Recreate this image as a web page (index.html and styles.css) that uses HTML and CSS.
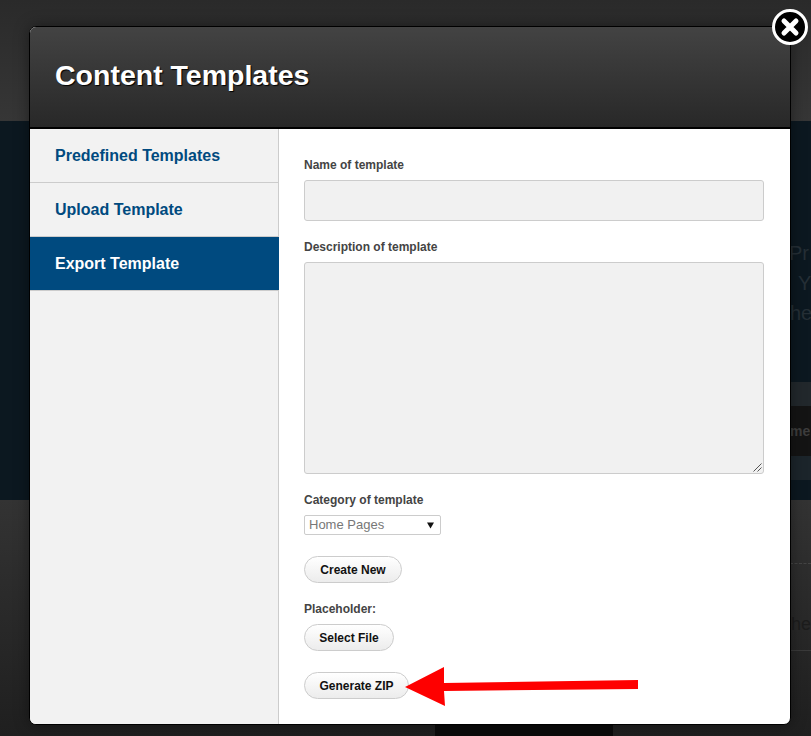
FILE: index.html
```html
<!DOCTYPE html>
<html lang="en">
<head>
    <meta charset="UTF-8">
    <meta name="viewport" content="width=device-width, initial-scale=1.0">
    <title>Content Templates</title>
    <link rel="stylesheet" href="styles.css">
</head>
<body>
    <!-- Page behind the modal -->
    <div class="page">
        <div class="page-top"></div>
        <div class="page-hero">
            <div class="hero-text">
                <p class="hero-line">Pr</p>
                <p class="hero-line hero-line-y">Y</p>
                <p class="hero-line hero-line-he">he</p>
            </div>
            <div class="hero-bar">
                <span class="hero-button">me</span>
            </div>
        </div>
        <div class="page-bottom">
            <div class="page-dashes"></div>
            <p class="page-copy">he</p>
            <div class="page-rule"></div>
            <div class="page-block"></div>
        </div>
    </div>

    <!-- Modal -->
    <div class="modal">
        <div class="modal-header">
            <h1>Content Templates</h1>
        </div>
        <div class="modal-body">
            <ul class="sidebar">
                <li class="sidebar-item"><a href="#">Predefined Templates</a></li>
                <li class="sidebar-item"><a href="#">Upload Template</a></li>
                <li class="sidebar-item active"><a href="#">Export Template</a></li>
            </ul>
            <form class="content">
                <label class="field-label">Name of template</label>
                <div class="field-input"></div>
                <label class="field-label">Description of template</label>
                <div class="field-textarea">
                    <svg class="resize-grip" width="9" height="9" viewBox="0 0 9 9">
                        <path d="M0.5 8.5L8.5 0.5M4.5 8.5L8.5 4.5" stroke="#555" stroke-width="1" fill="none"/>
                    </svg>
                </div>
                <label class="field-label">Category of template</label>
                <div class="select-box">
                    <span>Home Pages</span>
                    <svg width="7" height="7" viewBox="0 0 7 7">
                        <path d="M0 0.5H7L3.5 6.5Z" fill="#111"/>
                    </svg>
                </div>
                <button type="button" class="btn btn-create">Create New</button>
                <label class="field-label">Placeholder:</label>
                <button type="button" class="btn btn-select">Select File</button>
                <button type="button" class="btn btn-zip">Generate ZIP</button>
            </form>
        </div>
    </div>

    <!-- Close button -->
    <div class="modal-close">
        <svg width="20" height="20" viewBox="0 0 20 20">
            <path d="M4 4L16 16M16 4L4 16" stroke="#fff" stroke-width="5" stroke-linecap="round" fill="none"/>
        </svg>
    </div>

    <!-- Red annotation arrow -->
    <svg class="arrow" width="236" height="42" viewBox="0 0 236 42">
        <path d="M2 21L41 1V17L235 14V23L41 25L42 40Z" fill="#fe0000"/>
    </svg>
</body>
</html>
```

FILE: styles.css
```css
/* Reset and base styles */
* {
    margin: 0;
    padding: 0;
    box-sizing: border-box;
}

body {
    height: 736px;
    overflow: hidden;
    position: relative;
    font-family: "Liberation Sans", Arial, sans-serif;
    background-color: #222;
}

/* Page behind the modal */
.page {
    height: 736px;
    display: flex;
    flex-direction: column;
}

.page-top {
    height: 121px;
    background: linear-gradient(#2a2a2a, #363636);
}

.page-hero {
    height: 379px;
    background-color: #0c1820;
    display: flex;
    flex-direction: column;
    align-items: flex-end;
}

.hero-text {
    margin-top: 117px;
    width: 22px;
    height: 144px;
    color: #252f36;
    font-size: 20px;
    line-height: 30px;
}

.hero-line {
    white-space: nowrap;
}

.hero-line-y {
    padding-left: 9px;
}

.hero-line-he {
    padding-left: 1px;
}

.hero-bar {
    width: 21px;
    height: 98px;
    border-top: 24px solid #22282c;
    border-bottom: 24px solid #1c252b;
    background-color: #141414;
    display: flex;
    align-items: center;
}

.hero-button {
    overflow: hidden;
    color: #3d3d3d;
    font-size: 14px;
    font-weight: bold;
}

.page-bottom {
    flex: 1;
    background: linear-gradient(#333, #1f1f1f);
    display: flex;
    flex-direction: column;
    align-items: flex-end;
}

.page-dashes {
    width: 21px;
    margin-top: 63px;
    border-top: 1px dashed #444;
}

.page-copy {
    width: 20px;
    margin-top: 48px;
    color: #1c1c1c;
    font-size: 18px;
    line-height: 24px;
    white-space: nowrap;
}

.page-rule {
    width: 21px;
    margin-top: 14px;
    border-top: 1px solid #3a3a3a;
}

.page-block {
    position: absolute;
    left: 435px;
    top: 725px;
    width: 178px;
    height: 11px;
    background-color: #0b0b0b;
}

/* Modal */
.modal {
    position: absolute;
    left: 29px;
    top: 26px;
    width: 762px;
    height: 699px;
    border: 1px solid #000;
    border-radius: 7px;
    background-color: #fff;
    box-shadow: 0 0 15px rgba(0, 0, 0, 0.4);
    overflow: hidden;
    display: flex;
    flex-direction: column;
}

.modal-header {
    height: 102px;
    flex-shrink: 0;
    background: linear-gradient(#434343, #282828);
    border-bottom: 2px solid #000;
    padding: 32px 25px 0;
}

.modal-header h1 {
    color: #fff;
    font-size: 28.5px;
    line-height: 32px;
    text-shadow: 1px 1px 1px #000;
}

.modal-body {
    flex: 1;
    display: flex;
}

/* Sidebar */
.sidebar {
    width: 249px;
    flex-shrink: 0;
    list-style: none;
    background-color: #f2f2f2;
    border-right: 1px solid #ccc;
}

.sidebar-item {
    height: 54px;
    border-bottom: 1px solid #ccc;
}

.sidebar-item a {
    display: block;
    padding: 18px 25px 0;
    color: #004a7f;
    font-size: 16px;
    line-height: 18px;
    font-weight: bold;
    text-decoration: none;
}

.sidebar-item.active {
    background-color: #004a7f;
    margin-right: -1px;
}

.sidebar-item.active a {
    color: #fff;
}

/* Form */
.content {
    flex: 1;
    padding: 29px 26px 0 25px;
    display: flex;
    flex-direction: column;
    align-items: flex-start;
}

.field-label {
    color: #444;
    font-size: 12px;
    line-height: 14px;
    font-weight: bold;
}

.field-input {
    width: 460px;
    height: 41px;
    margin: 8px 0 19px;
    background-color: #f1f1f1;
    border: 1px solid #ccc;
    border-radius: 3px;
}

.field-textarea {
    width: 460px;
    height: 212px;
    margin: 8px 0 19px;
    background-color: #f1f1f1;
    border: 1px solid #ccc;
    border-radius: 3px;
    position: relative;
}

.resize-grip {
    position: absolute;
    right: 1px;
    bottom: 1px;
}

.select-box {
    width: 137px;
    height: 20px;
    margin-top: 8px;
    padding: 0 6px 0 4px;
    border: 1px solid #ccc;
    border-radius: 2px;
    background-color: #fff;
    color: #777;
    font-size: 13px;
    line-height: 18px;
    display: flex;
    justify-content: space-between;
    align-items: center;
}

.btn {
    height: 27px;
    border: 1px solid #ccc;
    border-radius: 14px;
    background: linear-gradient(#fff, #ececec);
    color: #111;
    font-family: inherit;
    font-size: 12px;
    font-weight: bold;
}

.btn-create {
    width: 98px;
    margin: 21px 0 19px;
}

.btn-select {
    width: 90px;
    margin-top: 8px;
}

.btn-zip {
    width: 105px;
    margin-top: 21px;
}

/* Close button */
.modal-close {
    position: absolute;
    left: 772px;
    top: 9px;
    width: 36px;
    height: 36px;
    border: 3px solid #fff;
    border-radius: 50%;
    background-color: #000;
    display: flex;
    justify-content: center;
    align-items: center;
}

/* Annotation arrow */
.arrow {
    position: absolute;
    left: 403px;
    top: 666px;
}
```
